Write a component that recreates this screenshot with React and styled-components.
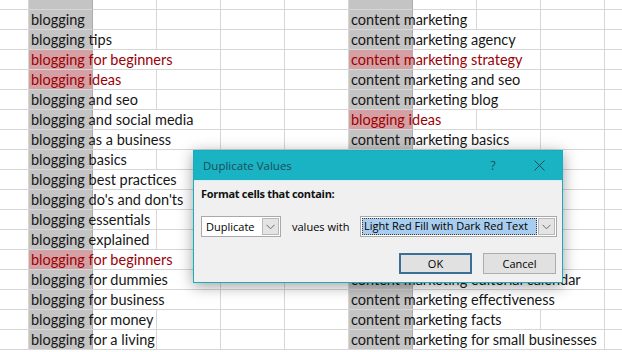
import React from 'react';
import styled, { createGlobalStyle } from 'styled-components';

const GlobalStyle = createGlobalStyle`
  html, body {
    margin: 0;
    padding: 0;
    background: #fff;
  }
  body {
    overflow: hidden;
  }
`;

const GRID = '#d6d6d6';
const SEL = '#c4c4c4';
const SEL_DUP = '#d5a0a3';
const SEL_EDGE = '#ababab';

const rows = [
  { l: 'blogging', ls: 1, r: 'content marketing', rs: 2 },
  { l: 'blogging tips', ls: 2, r: 'content marketing agency', rs: 3 },
  { l: 'blogging for beginners', ls: 3, ld: true, r: 'content marketing strategy', rs: 3, rd: true },
  { l: 'blogging ideas', ls: 2, ld: true, r: 'content marketing and seo', rs: 3 },
  { l: 'blogging and seo', ls: 2, r: 'content marketing blog', rs: 3 },
  { l: 'blogging and social media', ls: 3, r: 'blogging ideas', rs: 2, rd: true },
  { l: 'blogging as a business', ls: 3, r: 'content marketing basics', rs: 3 },
  { l: 'blogging basics', ls: 2, r: 'content marketing best practices', rs: 4 },
  { l: 'blogging best practices', ls: 3, r: 'content marketing books', rs: 3 },
  { l: "blogging do's and don'ts", ls: 3, r: 'content marketing certification', rs: 3 },
  { l: 'blogging essentials', ls: 2, r: 'content marketing course', rs: 3 },
  { l: 'blogging explained', ls: 2, r: 'content marketing definition', rs: 3 },
  { l: 'blogging for beginners', ls: 3, ld: true, r: 'content marketing distribution', rs: 3 },
  { l: 'blogging for dummies', ls: 3, r: 'content marketing editorial calendar', rs: 4 },
  { l: 'blogging for business', ls: 3, r: 'content marketing effectiveness', rs: 4 },
  { l: 'blogging for money', ls: 2, r: 'content marketing facts', rs: 3 },
  { l: 'blogging for a living', ls: 2, r: 'content marketing for small businesses', rs: 4 },
];

const Sheet = styled.div`
  position: relative;
  width: 622px;
  height: 352px;
  overflow: hidden;
  background: #fff;
  font-family: Lato, "Liberation Sans", sans-serif;
  font-size: 14.5px;
  color: #161616;
`;

const Row = styled.div`
  display: grid;
  grid-template-columns: 29px repeat(9, 64px) 1fr;
  height: ${({ $h }) => $h}px;
`;

const fillColor = (fill) => (fill === 'dup' ? SEL_DUP : SEL);

const Cell = styled.div`
  box-sizing: border-box;
  grid-column: span ${({ $span }) => $span || 1};
  border-right: ${({ $last, $fill, $span }) =>
    $last ? 'none' : `1px solid ${$fill && ($span || 1) === 1 ? SEL_EDGE : GRID}`};
  border-bottom: 1px solid ${GRID};
  background: ${({ $fill }) =>
    $fill
      ? `linear-gradient(90deg, ${fillColor($fill)} 0 63px, ${SEL_EDGE} 63px 64px, transparent 64px)`
      : 'transparent'};
  padding: 1px 0 0 2px;
  line-height: 18px;
  white-space: nowrap;
  overflow: hidden;
  color: ${({ $fill }) => ($fill === 'dup' ? '#9c0006' : 'inherit')};
`;

function SheetRow({ row }) {
  const cells = [<Cell key="a" />];
  cells.push(
    <Cell key="l" $span={row.ls} $fill={row.ld ? 'dup' : 'sel'}>
      {row.l}
    </Cell>
  );
  for (let c = 2 + row.ls; c < 7; c++) cells.push(<Cell key={'m' + c} />);
  cells.push(
    <Cell key="r" $span={row.rs} $fill={row.rd ? 'dup' : 'sel'}>
      {row.r}
    </Cell>
  );
  for (let c = 7 + row.rs; c <= 11; c++) cells.push(<Cell key={'e' + c} $last={c === 11} />);
  return <Row $h={20}>{cells}</Row>;
}

function TopRow() {
  const cells = [];
  for (let c = 1; c <= 11; c++) {
    cells.push(<Cell key={c} $fill={c === 2 || c === 7 ? 'sel' : undefined} $last={c === 11} />);
  }
  return <Row $h={10}>{cells}</Row>;
}

/* dialog */

const Dialog = styled.div`
  position: absolute;
  left: 193px;
  top: 150px;
  width: 370px;
  height: 133px;
  box-sizing: border-box;
  border: 1px solid #16aebf;
  background: #f0f0f0;
  box-shadow: 0 3px 14px rgba(0, 0, 0, 0.38);
  font-family: "Open Sans", "Noto Sans", sans-serif;
  font-size: 11px;
  color: #000;
  display: flex;
  flex-direction: column;
`;

const TitleBar = styled.div`
  height: 29px;
  flex: none;
  display: flex;
  align-items: center;
  padding-left: 9px;
  background: #19b3c4;
  color: #1d4c57;
  font-size: 11.5px;
  border-bottom: 1px solid #d2f1f5;
`;

const TitleText = styled.div`
  flex: 1;
`;

const TitleButton = styled.div`
  width: 46px;
  height: 29px;
  display: flex;
  align-items: center;
  justify-content: center;
  font-size: 12px;
  color: #1d4c57;
`;

const Body = styled.div`
  flex: 1;
  display: flex;
  flex-direction: column;
  padding: 6px 5px 0 7px;
`;

const Label = styled.div`
  font-weight: 700;
  line-height: 14px;
  letter-spacing: -0.3px;
  color: #111;
`;

const ControlsRow = styled.div`
  display: flex;
  align-items: center;
  height: 21px;
  margin-top: 15px;
`;

const Combo = styled.div`
  box-sizing: border-box;
  width: ${({ $w }) => $w}px;
  height: 21px;
  display: flex;
  padding: 1px;
  border: 1px solid #a9a9a9;
  background: #fff;
  margin-left: ${({ $push }) => ($push ? 'auto' : '0')};
`;

const ComboText = styled.div`
  flex: 1;
  padding-left: 3px;
  line-height: 17px;
  white-space: nowrap;
`;

const ComboSelected = styled.div`
  flex: 1;
  box-sizing: border-box;
  margin-right: 1px;
  padding-left: 2px;
  line-height: 15px;
  white-space: nowrap;
  background: #a9cdee;
  outline: 1px dotted #3a3a3a;
  outline-offset: -1px;
`;

const ComboArrow = styled.div`
  box-sizing: border-box;
  width: 17px;
  display: flex;
  align-items: center;
  justify-content: center;
  background: #e4e4e4;
  border: 1px solid #b9b9b9;
`;

const ValuesLabel = styled.div`
  margin-left: 11px;
`;

const ButtonsRow = styled.div`
  display: flex;
  justify-content: flex-end;
  gap: 11px;
  margin-top: 16px;
  padding-right: 1px;
`;

const Button = styled.div`
  box-sizing: border-box;
  width: 73px;
  height: 21px;
  display: flex;
  align-items: center;
  justify-content: center;
  background: #e1e1e1;
  border: ${({ $primary }) => ($primary ? '2px solid #3a6f96' : '1px solid #adadad')};
`;

const Chevron = () => (
  <svg width="9" height="6" viewBox="0 0 9 6">
    <polyline points="0.5,0.8 4.5,4.8 8.5,0.8" fill="none" stroke="#6a6a6a" strokeWidth="1" />
  </svg>
);

const CloseIcon = () => (
  <svg width="11" height="11" viewBox="0 0 11 11">
    <path d="M0.5 0.5 L10.5 10.5 M10.5 0.5 L0.5 10.5" stroke="#1d4c57" strokeWidth="1" />
  </svg>
);

export default function App() {
  return (
    <>
      <GlobalStyle />
      <Sheet>
        <TopRow />
        {rows.map((row, i) => (
          <SheetRow key={i} row={row} />
        ))}
        <Dialog>
          <TitleBar>
            <TitleText>Duplicate Values</TitleText>
            <TitleButton>?</TitleButton>
            <TitleButton>
              <CloseIcon />
            </TitleButton>
          </TitleBar>
          <Body>
            <Label>Format cells that contain:</Label>
            <ControlsRow>
              <Combo $w={80}>
                <ComboText>Duplicate</ComboText>
                <ComboArrow>
                  <Chevron />
                </ComboArrow>
              </Combo>
              <ValuesLabel>values with</ValuesLabel>
              <Combo $w={197} $push>
                <ComboSelected>Light Red Fill with Dark Red Text</ComboSelected>
                <ComboArrow>
                  <Chevron />
                </ComboArrow>
              </Combo>
            </ControlsRow>
            <ButtonsRow>
              <Button $primary>OK</Button>
              <Button>Cancel</Button>
            </ButtonsRow>
          </Body>
        </Dialog>
      </Sheet>
    </>
  );
}
